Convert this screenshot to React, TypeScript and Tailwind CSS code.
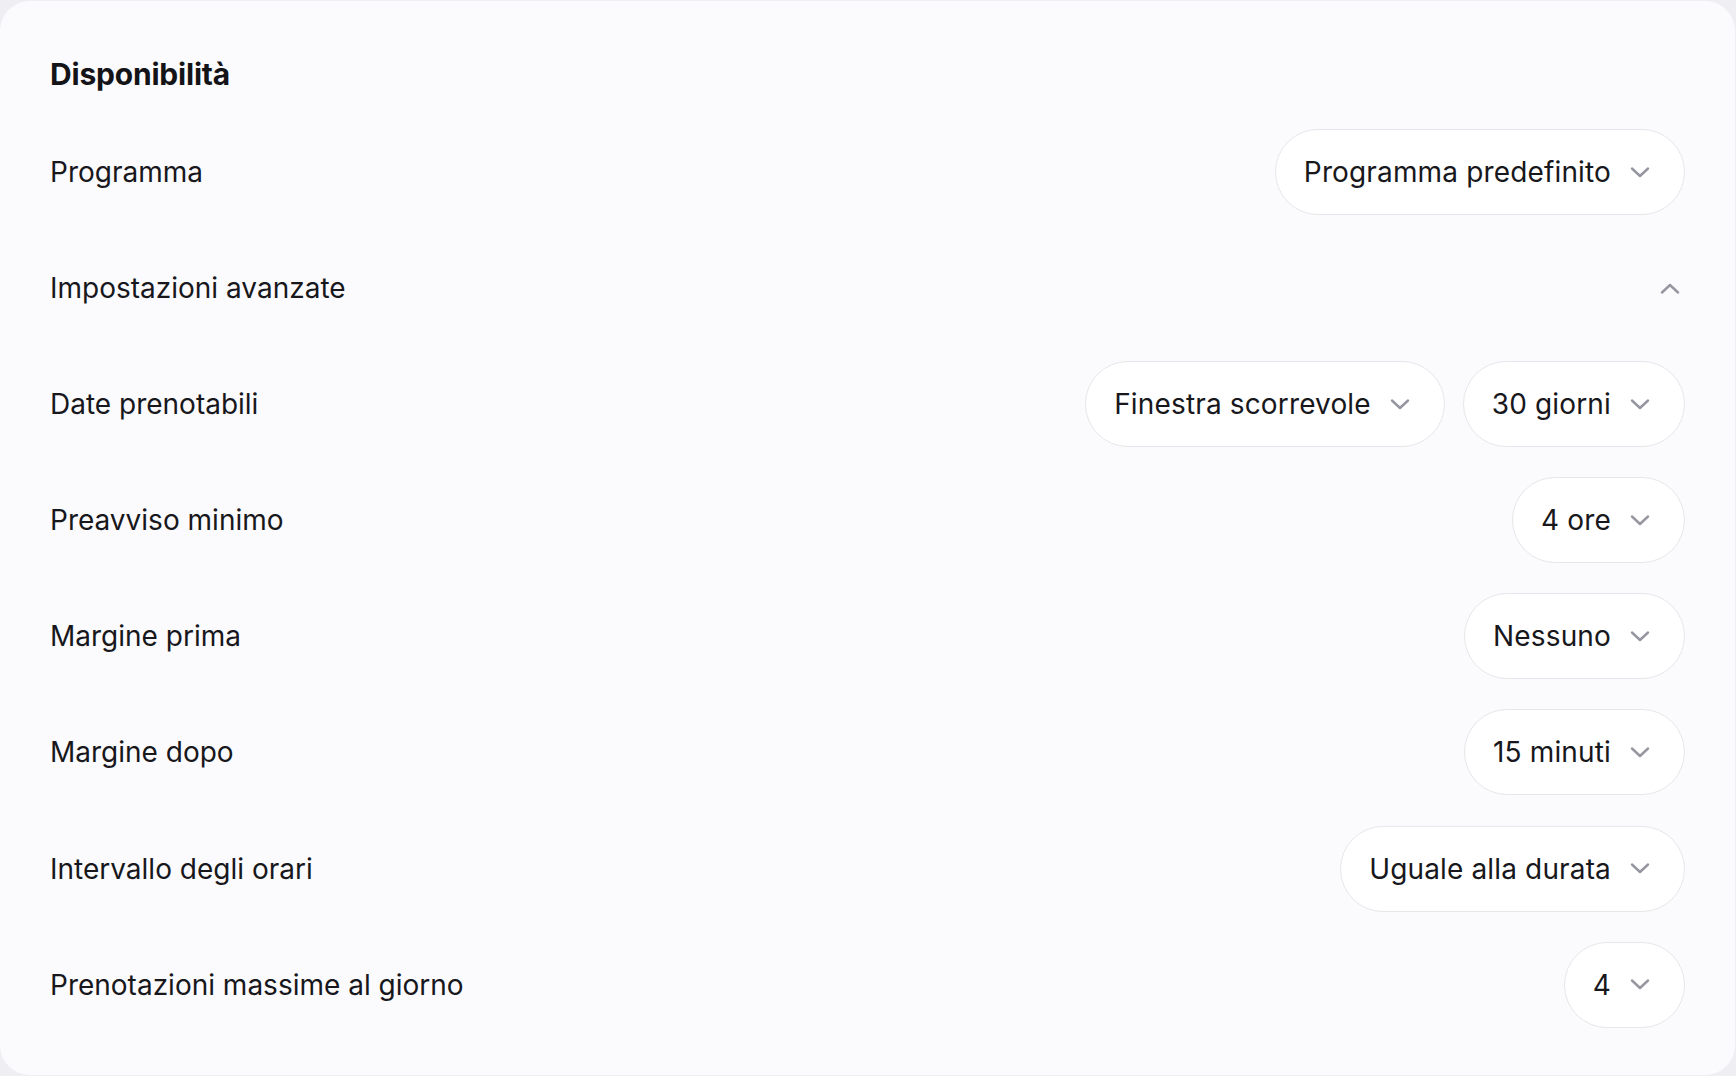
import React from "react";

const Chevron = ({ up = false }: { up?: boolean }) => (
  <svg width="20" height="11" viewBox="0 0 20 11" fill="none" className="shrink-0">
    <polyline
      points={up ? "2,9.5 10,2 18,9.5" : "2,1.5 10,9 18,1.5"}
      stroke="#9696a0"
      strokeWidth="2.4"
      strokeLinecap="round"
      strokeLinejoin="round"
    />
  </svg>
);

const Pill = ({ label }: { label: string }) => (
  <div className="flex h-[86px] items-center gap-[19px] rounded-full border-[1.5px] border-[#e7e7eb] bg-white pl-[28px] pr-[34px]">
    <span className="text-[28px] leading-none tracking-[0.15px] text-[#17171c]">{label}</span>
    <Chevron />
  </div>
);

const Row = ({ label, children }: { label: string; children: React.ReactNode }) => (
  <div className="flex h-[86px] items-center justify-between">
    <span className="text-[28px] leading-none text-[#17171c]">{label}</span>
    <div className="flex items-center gap-[18px]">{children}</div>
  </div>
);

export default function App() {
  return (
    <div
      className="h-[1076px] w-full bg-[#efeff3] pt-px"
      style={{ fontFamily: "Inter, 'Noto Sans', sans-serif" }}
    >
      <div className="mr-px h-[1074px] rounded-[30px] bg-[#fbfbfd] px-[50px] pt-[53px]">
        <h1 className="mb-[35px] h-[40px] text-[30px] font-bold leading-[40px] tracking-[-0.2px] text-[#141418]">
          Disponibilità
        </h1>
        <div className="flex flex-col gap-[30.1px]">
          <Row label="Programma">
            <Pill label="Programma predefinito" />
          </Row>
          <Row label="Impostazioni avanzate">
            <div className="mr-[5px]">
              <Chevron up />
            </div>
          </Row>
          <Row label="Date prenotabili">
            <Pill label="Finestra scorrevole" />
            <Pill label="30 giorni" />
          </Row>
          <Row label="Preavviso minimo">
            <Pill label="4 ore" />
          </Row>
          <Row label="Margine prima">
            <Pill label="Nessuno" />
          </Row>
          <Row label="Margine dopo">
            <Pill label="15 minuti" />
          </Row>
          <Row label="Intervallo degli orari">
            <Pill label="Uguale alla durata" />
          </Row>
          <Row label="Prenotazioni massime al giorno">
            <Pill label="4" />
          </Row>
        </div>
      </div>
    </div>
  );
}
